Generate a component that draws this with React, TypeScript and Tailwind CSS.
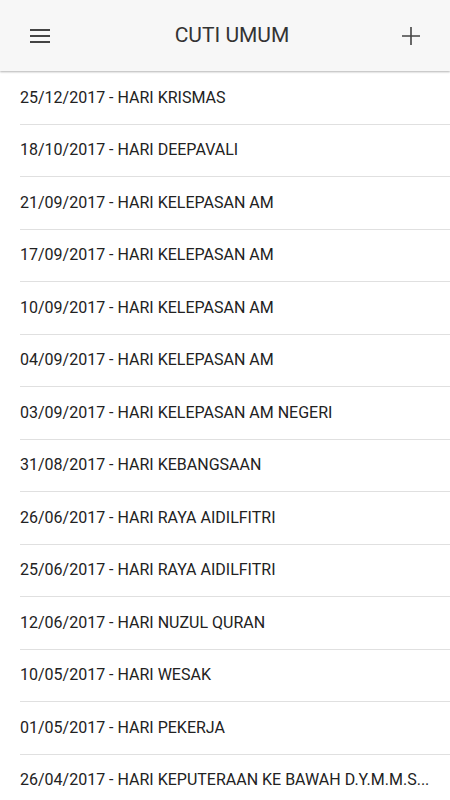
import React from 'react';

const HOLIDAYS = [
  '25/12/2017 - HARI KRISMAS',
  '18/10/2017 - HARI DEEPAVALI',
  '21/09/2017 - HARI KELEPASAN AM',
  '17/09/2017 - HARI KELEPASAN AM',
  '10/09/2017 - HARI KELEPASAN AM',
  '04/09/2017 - HARI KELEPASAN AM',
  '03/09/2017 - HARI KELEPASAN AM NEGERI',
  '31/08/2017 - HARI KEBANGSAAN',
  '26/06/2017 - HARI RAYA AIDILFITRI',
  '25/06/2017 - HARI RAYA AIDILFITRI',
  '12/06/2017 - HARI NUZUL QURAN',
  '10/05/2017 - HARI WESAK',
  '01/05/2017 - HARI PEKERJA',
  '26/04/2017 - HARI KEPUTERAAN KE BAWAH D.Y.M.M.S...',
];

export default function App() {
  return (
    <div className="h-[800px] w-full overflow-hidden bg-white font-['Roboto',sans-serif]">
      {/* Toolbar */}
      <header className="relative z-10 flex h-[71px] items-center justify-between bg-[#f7f7f7] pl-[30px] pr-[30px] shadow-[0_1px_2px_rgba(0,0,0,0.3)]">
        <svg width="20" height="14" viewBox="0 0 20 14" className="text-[#444]">
          <rect x="0" y="0" width="20" height="2" fill="currentColor" />
          <rect x="0" y="6" width="20" height="2" fill="currentColor" />
          <rect x="0" y="12" width="20" height="2" fill="currentColor" />
        </svg>
        <h1 className="ml-[12px] text-[21px] text-[#333]">CUTI UMUM</h1>
        <svg width="18" height="18" viewBox="0 0 18 18" className="text-[#444]">
          <path d="M9 0v18M0 9h18" stroke="currentColor" strokeWidth="1.6" />
        </svg>
      </header>

      {/* Holiday list */}
      <ul className="pt-[1px]">
        {HOLIDAYS.map((item) => (
          <li key={item} className="ml-[20px] flex h-[52.5px] items-center border-b border-[#e0e0e0]">
            <span className="whitespace-nowrap text-[16px] text-[#222]">{item}</span>
          </li>
        ))}
      </ul>
    </div>
  );
}
